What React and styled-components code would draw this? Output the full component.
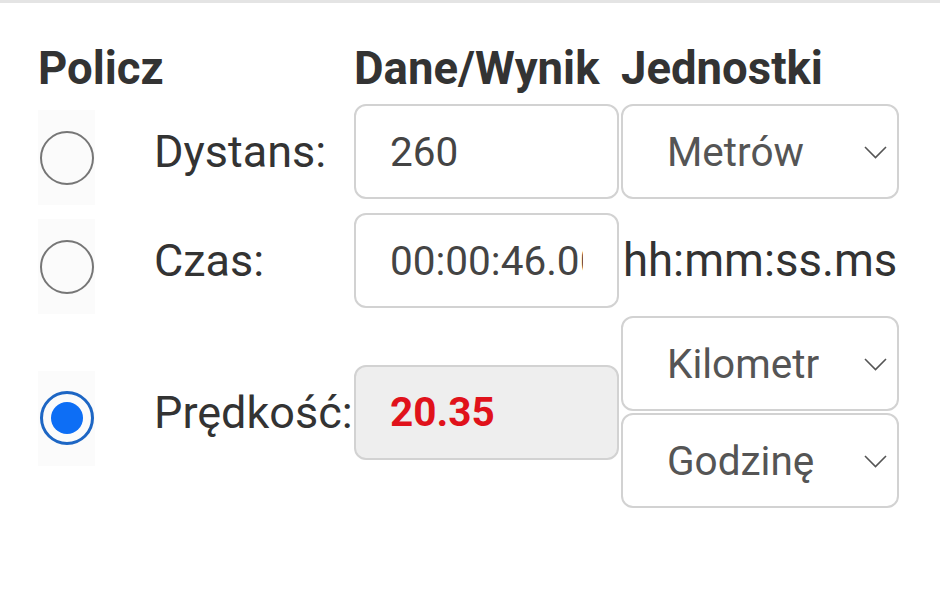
import React from "react";
import styled, { createGlobalStyle } from "styled-components";

const GlobalStyle = createGlobalStyle`
  html, body {
    margin: 0;
    padding: 0;
    background: #fff;
  }
  body {
    font-family: Roboto, "Noto Sans", Arial, sans-serif;
    color: #333;
  }
`;

const TopRule = styled.div`
  height: 3px;
  background: #e4e4e4;
`;

const Table = styled.div`
  display: grid;
  grid-template-columns: 57px 255px 265px 278px;
  column-gap: 2px;
  row-gap: 2px;
  align-items: center;
  padding: 39px 0 0 38px;
`;

const Head = styled.div`
  grid-column: span ${(p) => p.$span || 1};
  font-size: 45.5px;
  line-height: 54px;
  font-weight: 700;
  color: #333;
  white-space: nowrap;
`;

const RadioCell = styled.label`
  height: 95px;
  margin-top: 12px;
  background: #fbfbfb;
  display: flex;
  align-items: center;
  justify-content: center;
`;

const Radio = styled.span`
  box-sizing: border-box;
  width: 54px;
  height: 54px;
  border-radius: 50%;
  border: ${(p) => (p.$checked ? "3px solid #1d66c4" : "2.5px solid #767676")};
  display: flex;
  align-items: center;
  justify-content: center;

  &::after {
    content: "";
    display: ${(p) => (p.$checked ? "block" : "none")};
    width: 32px;
    height: 32px;
    border-radius: 50%;
    background: #0d6ef5;
  }
`;

const Label = styled.div`
  padding-left: 57px;
  font-size: 45px;
  color: #333;
  white-space: nowrap;
`;

const Field = styled.input`
  box-sizing: border-box;
  width: 265px;
  height: 95px;
  margin: 0;
  padding: 0 34px;
  border: 2px solid #d2d2d2;
  border-radius: 12px;
  font-family: Roboto, "Noto Sans", Arial, sans-serif;
  font-size: 40.5px;
  font-weight: ${(p) => (p.$result ? 700 : 400)};
  color: ${(p) => (p.$result ? "#e0121b" : "#444")};
  background: ${(p) => (p.$result ? "#eeeeee" : "#fff")};
  outline: none;
`;

const Unit = styled.div`
  padding-left: 2px;
  font-size: 45.5px;
  color: #333;
  white-space: nowrap;
`;

const Stack = styled.div`
  display: flex;
  flex-direction: column;
  gap: 2px;
`;

const SelectBox = styled.div`
  position: relative;
  width: 278px;
  height: 95px;
`;

const Select = styled.select`
  box-sizing: border-box;
  width: 100%;
  height: 100%;
  margin: 0;
  padding: 0 78px 0 44px;
  border: 2px solid #d2d2d2;
  border-radius: 12px;
  appearance: none;
  background: #fff;
  font-family: Roboto, "Noto Sans", Arial, sans-serif;
  font-size: 40.5px;
  color: #555;
  outline: none;
`;

const Chevron = styled.svg`
  position: absolute;
  right: 12px;
  top: 50%;
  width: 23px;
  height: 13px;
  margin-top: -6px;
  pointer-events: none;
`;

function UnitSelect({ value, options }) {
  return (
    <SelectBox>
      <Select defaultValue={value}>
        {options.map((o) => (
          <option key={o}>{o}</option>
        ))}
      </Select>
      <Chevron viewBox="0 0 23 13">
        <polyline
          points="1,1 11.5,11.5 22,1"
          fill="none"
          stroke="#555"
          strokeWidth="1.6"
        />
      </Chevron>
    </SelectBox>
  );
}

export default function App() {
  return (
    <>
      <GlobalStyle />
      <TopRule />
      <Table>
        <Head $span={2}>Policz</Head>
        <Head>Dane/Wynik</Head>
        <Head>Jednostki</Head>

        <RadioCell>
          <Radio />
        </RadioCell>
        <Label>Dystans:</Label>
        <Field defaultValue="260" />
        <UnitSelect value="Metrów" options={["Metrów", "Kilometrów", "Mil"]} />

        <RadioCell>
          <Radio />
        </RadioCell>
        <Label>Czas:</Label>
        <Field defaultValue="00:00:46.00" />
        <Unit>hh:mm:ss.ms</Unit>

        <RadioCell>
          <Radio $checked />
        </RadioCell>
        <Label>Prędkość:</Label>
        <Field $result readOnly value="20.35" />
        <Stack>
          <UnitSelect
            value="Kilometrów"
            options={["Metrów", "Kilometrów", "Mil"]}
          />
          <UnitSelect
            value="Godzinę"
            options={["Sekundę", "Minutę", "Godzinę"]}
          />
        </Stack>
      </Table>
    </>
  );
}
